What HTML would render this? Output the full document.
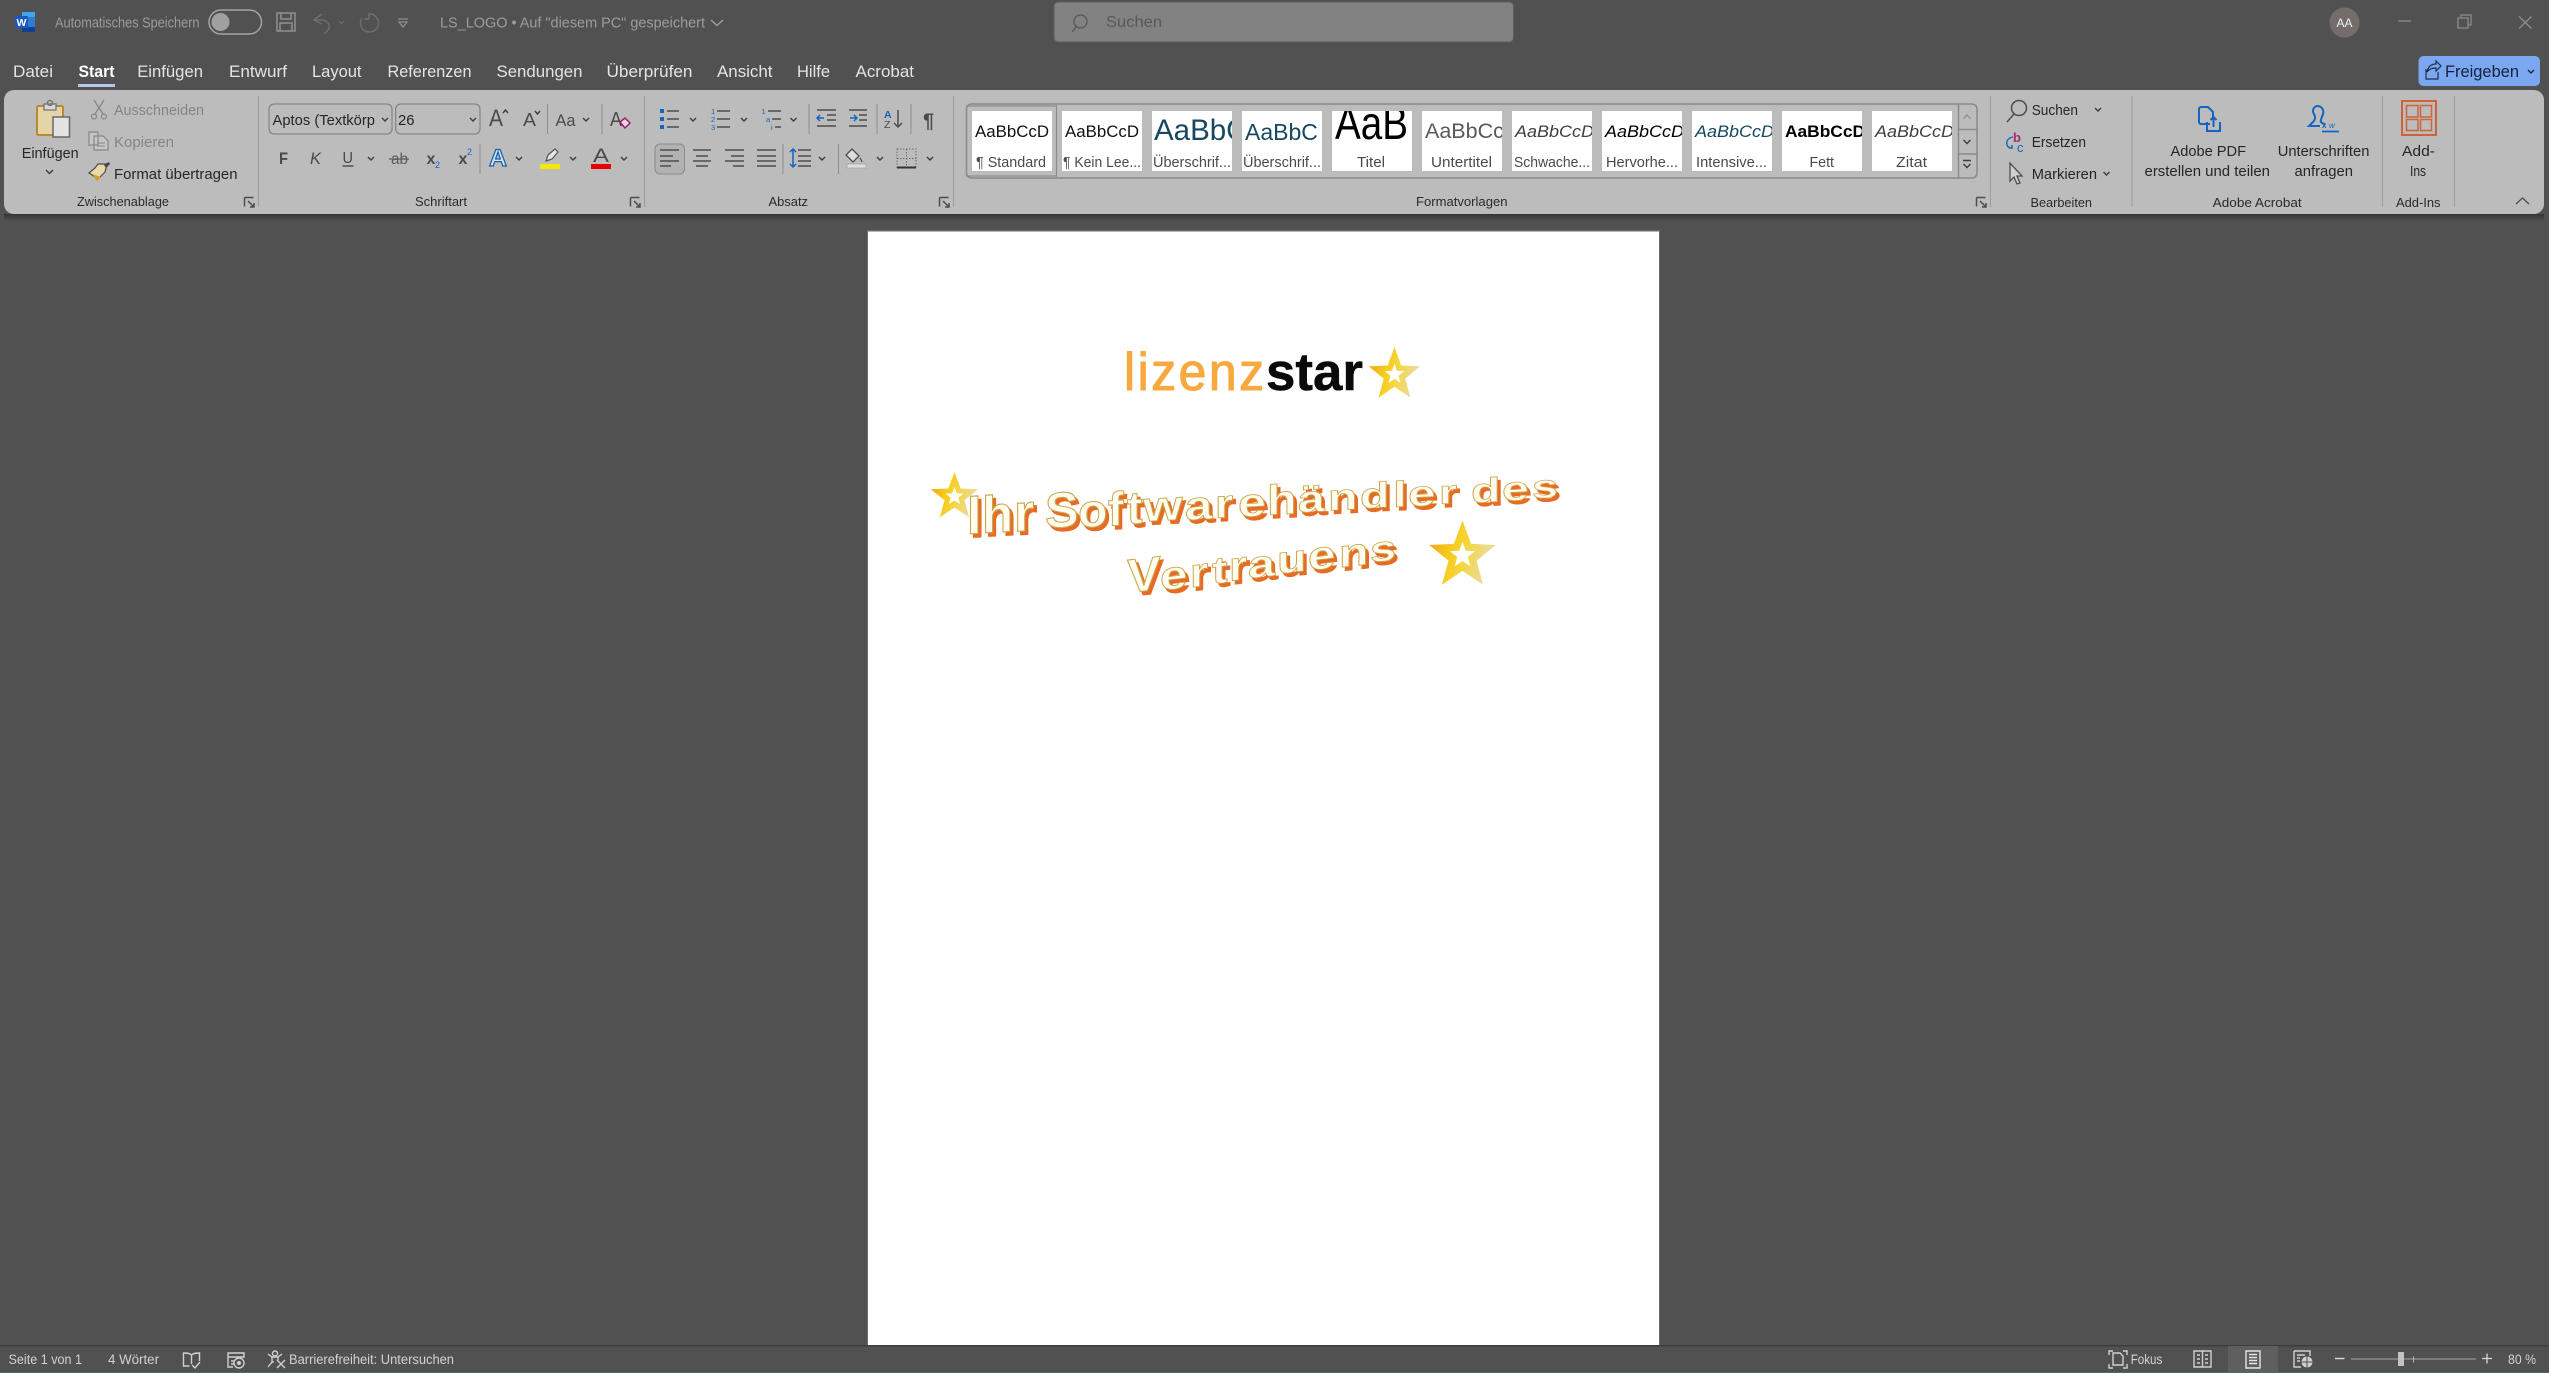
<!DOCTYPE html>
<html lang="de"><head><meta charset="utf-8"><title>LS_LOGO - Word</title>
<style>
html,body{margin:0;padding:0;background:#515151;width:2549px;height:1373px;overflow:hidden}
svg{display:block}
text{font-family:"Liberation Sans",sans-serif;white-space:pre}
.m{font-size:17px;fill:#e4e4e4}
.r{font-size:15px;fill:#262626}
.d{font-size:15px;fill:#858585}
.g{font-size:13px;fill:#2a2a2a}
.l{font-size:14.5px;fill:#4a4a4a}
.s{font-size:13.5px;fill:#d2d2d2}
.ti{font-size:14.5px;fill:#9c9c9c}
.sm{font-size:17px;fill:#111}
.i{fill:none;stroke:#4d4d4d;stroke-width:1.5}
.c{fill:none;stroke:#3c3c3c;stroke-width:1.4}
.b{fill:none;stroke:#1565c0;stroke-width:2}
.w{font-weight:bold;font-size:52px;fill:#fffdf0;stroke:#cda648;stroke-width:1.1}
.st{fill:none;stroke:#cfcfcf;stroke-width:1.4}
</style></head>
<body>
<svg width="2549" height="1373" viewBox="0 0 2549 1373" xmlns="http://www.w3.org/2000/svg">
<defs>
<linearGradient id="gold" x1="0" y1="0" x2="1" y2="0.25"><stop offset="0" stop-color="#ef9c14"/><stop offset=".4" stop-color="#f6cb1c"/><stop offset=".62" stop-color="#f5d63c"/><stop offset="1" stop-color="#eadba0"/></linearGradient>
<filter id="sh" x="-5%" y="-20%" width="110%" height="140%"><feDropShadow dx="3" dy="3.5" stdDeviation="0" flood-color="#e66c28"/></filter>
<linearGradient id="ribbonshadow" x1="0" y1="0" x2="0" y2="1"><stop offset="0" stop-color="#333"/><stop offset="1" stop-color="#515151"/></linearGradient>
</defs>
<rect width="2549" height="1373" fill="#515151"/>

<!-- title bar -->
<rect x="22" y="12" width="13" height="20" rx="1" fill="#2b7cd3"/><rect x="22" y="12" width="13" height="5" fill="#41a5ee"/><rect x="22" y="27" width="13" height="5" fill="#103f91"/>
<rect x="15" y="16" width="13" height="12" rx="1" fill="#185abd"/>
<text x="16.5" y="26" font-size="10.5" font-weight="bold" fill="#fff">W</text>
<text class="ti" x="55" y="27.500" textLength="144.500" lengthAdjust="spacingAndGlyphs">Automatisches Speichern</text>
<rect x="209" y="10" width="52.500" height="24" rx="12" fill="none" stroke="#a4a4a4" stroke-width="1.500"/>
<circle cx="220.500" cy="22" r="9" fill="#a0a0a0"/>
<path d="M277 13h18v18h-18zM281 13v6h10v-6M280 31v-8h12v8" fill="none" stroke="#909090" stroke-width="1.500"/>
<path d="M322 14l-8 6 8 4M315 20h6c6 0 9 4 8 8-1 3-3 4-5 6" fill="none" stroke="#6e6e6e" stroke-width="1.500"/>
<path d="M339 21l2.500 2.500 2.500-2.500" fill="none" stroke="#6e6e6e" stroke-width="1.200"/>
<path d="M369 14a9 9 0 1 1-7 4M369 13v6h-5" fill="none" stroke="#6e6e6e" stroke-width="1.500"/>
<path d="M398 19h10M399 22l4 5 4-5z" fill="none" stroke="#909090" stroke-width="1.200"/>
<text class="ti" x="440" y="27.500" textLength="265" lengthAdjust="spacingAndGlyphs">LS_LOGO • Auf "diesem PC" gespeichert</text>
<path d="M711 20l6 5.500 6-5.500" fill="none" stroke="#a0a0a0" stroke-width="1.300"/>

<!-- search -->
<rect x="1054" y="2" width="459.500" height="40" rx="4" fill="#828282" stroke="#5c5c5c"/>
<path d="M1080.500 15a6.500 6.500 0 1 1-.1 0M1076 27l-4 5" fill="none" stroke="#5a5a5a" stroke-width="1.400"/>
<text x="1106" y="27" font-size="16" fill="#585858" textLength="56" lengthAdjust="spacingAndGlyphs">Suchen</text>

<!-- window controls -->
<circle cx="2344.500" cy="22.500" r="15" fill="#756c6c"/>
<text x="2336.500" y="27" font-size="12" fill="#f0f0f0" textLength="16" lengthAdjust="spacingAndGlyphs">AA</text>
<path d="M2398 21h13" stroke="#8d8d8d" stroke-width="1.300"/>
<path d="M2458 18h10v10h-10zM2461 18v-3h10v10h-3" fill="none" stroke="#8d8d8d" stroke-width="1.300"/>
<path d="M2519 16.500l12.500 12M2531.500 16.500l-12.500 12" stroke="#8d8d8d" stroke-width="1.300"/>

<!-- menu -->
<text class="m" x="13" y="77" textLength="40" lengthAdjust="spacingAndGlyphs">Datei</text>
<text class="m" x="78.500" y="77" textLength="36" lengthAdjust="spacingAndGlyphs" font-weight="bold" style="fill:#fff">Start</text>
<text class="m" x="137.200" y="77" textLength="65.800" lengthAdjust="spacingAndGlyphs">Einfügen</text>
<text class="m" x="229" y="77" textLength="58" lengthAdjust="spacingAndGlyphs">Entwurf</text>
<text class="m" x="312" y="77" textLength="49.500" lengthAdjust="spacingAndGlyphs">Layout</text>
<text class="m" x="387.500" y="77" textLength="84" lengthAdjust="spacingAndGlyphs">Referenzen</text>
<text class="m" x="496.500" y="77" textLength="86" lengthAdjust="spacingAndGlyphs">Sendungen</text>
<text class="m" x="606.500" y="77" textLength="86" lengthAdjust="spacingAndGlyphs">Überprüfen</text>
<text class="m" x="717" y="77" textLength="55.500" lengthAdjust="spacingAndGlyphs">Ansicht</text>
<text class="m" x="797" y="77" textLength="33" lengthAdjust="spacingAndGlyphs">Hilfe</text>
<text class="m" x="855.500" y="77" textLength="58.500" lengthAdjust="spacingAndGlyphs">Acrobat</text>
<rect x="78" y="84" width="37" height="3" fill="#b4c8ec"/>

<!-- Freigeben -->
<rect x="2418.500" y="56" width="121.500" height="30" rx="5" fill="#7ba7f1"/>
<path d="M2426 69v10h12v-7M2427 72c1-5 4-8 9-8v-3l5 5-5 5v-3c-4 0-7 1-9 4z" fill="none" stroke="#1d2c4d" stroke-width="1.200"/>
<text x="2445" y="77" font-size="17" fill="#14213d" textLength="74" lengthAdjust="spacingAndGlyphs">Freigeben</text>
<path d="M2528 70l3 3 3-3" fill="none" stroke="#14213d" stroke-width="1.300"/>

<!-- ribbon -->
<rect x="4" y="214" width="2540" height="7" fill="url(#ribbonshadow)"/>
<rect x="4" y="90" width="2540" height="124" rx="10" fill="#bcbcbc"/>
<g stroke="#9c9c9c" stroke-width="1">
<path d="M258.500 96v111M644.500 96v111M953.500 96v111M1990.500 96v111M2132 96v111M2382.500 96v111M2454.500 96v111"/>
</g>

<!-- clipboard group -->
<rect x="37" y="106" width="26" height="29" rx="1.500" fill="#e6d4a9" stroke="#b88a2e" stroke-width="2"/>
<rect x="44" y="104" width="12" height="6" fill="#d8d8d8" stroke="#6e6e6e" stroke-width="1.200"/>
<circle cx="50" cy="103" r="2.500" fill="none" stroke="#6e6e6e" stroke-width="1.200"/>
<rect x="53" y="117" width="16.500" height="20" fill="#e2e2e2" stroke="#686868" stroke-width="1.500"/>
<text class="r" x="21.700" y="158" textLength="57" lengthAdjust="spacingAndGlyphs">Einfügen</text>
<path class="c" d="M46 170l3.500 3.500 3.500-3.500"/>
<path d="M94 100l9 14M104 100l-9 14" stroke="#868686" stroke-width="1.200"/>
<circle cx="94" cy="116.500" r="2.500" fill="none" stroke="#868686" stroke-width="1.200"/><circle cx="104" cy="116.500" r="2.500" fill="none" stroke="#868686" stroke-width="1.200"/>
<text class="d" x="114" y="115" textLength="90" lengthAdjust="spacingAndGlyphs">Ausschneiden</text>
<path d="M89 132h9l0 13h-9zM94 136h9l5 5v9h-14z" fill="#c6c6c6" stroke="#868686" stroke-width="1.200"/>
<path d="M97 143h8M97 146h8" stroke="#868686"/>
<text class="d" x="114" y="147" textLength="60" lengthAdjust="spacingAndGlyphs">Kopieren</text>
<path d="M98 164l9 0-2 8-7 7-9-6 6-5z" fill="#e9d9a8" stroke="#4a4a4a" stroke-width="1.200"/>
<path d="M92 174l5 7 4-4z" fill="#d59c26"/><path d="M104 165l5-3 1 2-4 4z" fill="#444"/>
<text class="r" x="114" y="179" textLength="123.500" lengthAdjust="spacingAndGlyphs">Format übertragen</text>
<text class="g" x="77" y="206" textLength="92" lengthAdjust="spacingAndGlyphs">Zwischenablage</text>
<path class="i" d="M244.500 197.500h9M244.500 197.500v9M248 201l6 6m0-4v4h-4" stroke-width="1"/>

<!-- font group -->
<rect x="269" y="104" width="123" height="30" rx="5" fill="#bcbcbc" stroke="#7a7a7a"/>
<rect x="395.700" y="104" width="84.300" height="30" rx="5" fill="#bcbcbc" stroke="#7a7a7a"/>
<text class="r" x="272.500" y="125" font-size="15.500" textLength="102.500" lengthAdjust="spacingAndGlyphs">Aptos (Textkörp</text>
<text class="r" x="398" y="125" font-size="15.500" textLength="16.500" lengthAdjust="spacingAndGlyphs">26</text>
<path class="c" d="M382 118l3 3 3-3M470 118l3 3 3-3"/>
<text x="489" y="126" font-size="24" fill="#4a4a4a" textLength="14" lengthAdjust="spacingAndGlyphs">A</text>
<path class="c" d="M503 113l2.500-3 2.500 3"/>
<text x="523" y="126" font-size="18" fill="#4a4a4a" textLength="13" lengthAdjust="spacingAndGlyphs">A</text>
<path class="c" d="M535 111l2.500 3 2.500-3"/>
<path d="M547.500 104v30M602 104v30" stroke="#8e8e8e"/>
<text x="555.500" y="126" font-size="17" fill="#4a4a4a" textLength="20" lengthAdjust="spacingAndGlyphs">Aa</text>
<path class="c" d="M583 118l3 3 3-3"/>
<text x="610" y="126" font-size="20" fill="#4a4a4a" textLength="12" lengthAdjust="spacingAndGlyphs">A</text>
<path d="M620 122l5-4 5 5-5 5z" fill="#e8d6e0" stroke="#9b1f6a" stroke-width="1.500"/>
<text x="279" y="164" font-size="17" font-weight="bold" fill="#4a4a4a" textLength="9" lengthAdjust="spacingAndGlyphs">F</text>
<text x="310" y="164" font-size="17" font-style="italic" fill="#4a4a4a" textLength="11" lengthAdjust="spacingAndGlyphs">K</text>
<text x="342.500" y="163" font-size="16" fill="#4a4a4a" textLength="10.500" lengthAdjust="spacingAndGlyphs">U</text>
<path d="M342.500 166h11" stroke="#4a4a4a" stroke-width="1.400"/>
<path class="c" d="M368 157l3 3 3-3"/>
<text x="391" y="164" font-size="15.500" fill="#5c5c5c" textLength="17" lengthAdjust="spacingAndGlyphs">ab</text>
<path d="M389 159h20" stroke="#5c5c5c" stroke-width="1.200"/>
<text x="426.500" y="164" font-size="16" font-weight="bold" fill="#4a4a4a">x</text>
<text x="435" y="168" font-size="9" fill="#1565c0">2</text>
<text x="458.500" y="164" font-size="16" font-weight="bold" fill="#4a4a4a">x</text>
<text x="467" y="155" font-size="9" fill="#1565c0">2</text>
<path d="M480 144v30" stroke="#8e8e8e"/>
<text x="489" y="166" font-size="24" font-weight="bold" fill="#cfe4f6" stroke="#1a5fa8" stroke-width="1.200" textLength="18" lengthAdjust="spacingAndGlyphs">A</text>
<path class="c" d="M516 157l3 3 3-3"/>
<path d="M546 161l2-6 7-6 3 3-6 7z" fill="#e6e6e6" stroke="#555" stroke-width="1.200"/>
<rect x="540" y="164" width="20" height="5" fill="#f4ea00"/>
<path class="c" d="M570 157l3 3 3-3"/>
<text x="593" y="162" font-size="19" fill="#4a4a4a" textLength="16" lengthAdjust="spacingAndGlyphs">A</text>
<rect x="591" y="164" width="20" height="5" fill="#e60000"/>
<path class="c" d="M621 157l3 3 3-3"/>
<text class="g" x="415" y="206" textLength="52" lengthAdjust="spacingAndGlyphs">Schriftart</text>
<path class="i" d="M630.500 197.500h9M630.500 197.500v9M634 201l6 6m0-4v4h-4" stroke-width="1"/>

<!-- paragraph group -->
<path d="M660 109h4v4h-4zM660 117h4v4h-4zM660 125h4v4h-4z" fill="#1565c0"/>
<path class="i" d="M667 111h12M667 119h12M667 127h12"/>
<path class="c" d="M690 118l3 3 3-3M741 118l3 3 3-3M790.500 118l3 3 3-3"/>
<text x="711" y="114" font-size="7.500" fill="#1565c0">1</text><text x="711" y="122" font-size="7.500" fill="#1565c0">2</text><text x="711" y="130" font-size="7.500" fill="#1565c0">3</text>
<path class="i" d="M717 111h13M717 119h13M717 127h13"/>
<text x="761.500" y="114" font-size="7.500" fill="#1565c0">1</text><text x="766" y="122" font-size="7.500" fill="#1565c0">a</text><text x="771" y="130" font-size="7.500" fill="#1565c0">i</text>
<path class="i" d="M768 111h13M772 119h9M775 127h6"/>
<path d="M809 104v30M877 104v30M911 104v30" stroke="#8e8e8e"/>
<path class="i" d="M817 110h19M827 115h9M827 120h9M817 126h19"/>
<path d="M824 118h-7m3-3l-3 3 3 3" fill="none" stroke="#1565c0" stroke-width="1.500"/>
<path class="i" d="M849 110h18M859 115h8M859 120h8M849 126h18"/>
<path d="M850 118h7m-3-3l3 3-3 3" fill="none" stroke="#1565c0" stroke-width="1.500"/>
<text x="884" y="118" font-size="10.500" font-weight="bold" fill="#1565c0">A</text><text x="884" y="128" font-size="10.500" fill="#4a4a4a">Z</text>
<path class="i" d="M898 110v17m-4-4l4 4 4-4"/>
<text x="923" y="127.500" font-size="20" font-weight="bold" fill="#4a4a4a">¶</text>

<rect x="655" y="144" width="29.500" height="30" rx="5" fill="#b2b2b2" stroke="#8a8a8a"/>
<path class="i" d="M660 150h19M660 156h13M660 161h19M660 166h11"/>
<path class="i" d="M693 150h18M696 156h12M693 161h18M696 166h12"/>
<path class="i" d="M725 150h19M731 156h13M725 161h19M733 166h11"/>
<path class="i" d="M757 150h19M757 156h19M757 161h19M757 166h19"/>
<path d="M783 144v30M838.500 144v30" stroke="#8e8e8e"/>
<path class="i" d="M798 150h13M798 156h13M798 161h13M798 166h13"/>
<path d="M793 149v18m-3-15l3-3 3 3m-6 12l3 3 3-3" fill="none" stroke="#1565c0" stroke-width="1.500"/>
<path class="c" d="M819 157l3 3 3-3"/>
<path d="M852 149l7 7-6 6-7-7zM860 158c1 2 2 3 2 4" fill="#ddd" stroke="#4d4d4d" stroke-width="1.300"/>
<rect x="847" y="164" width="19" height="4" fill="#dedede" stroke="#a0a0a0" stroke-width=".7"/>
<path class="c" d="M877 157l3 3 3-3"/>
<path d="M897 149h19v19h-19zM906.500 149v19M897 158.500h19" fill="none" stroke="#6a6a6a" stroke-width="1" stroke-dasharray="1.500 1.500"/>
<path d="M897 167.500h19" stroke="#333" stroke-width="2"/>
<path class="c" d="M927 157l3 3 3-3"/>
<text class="g" x="768.500" y="206" textLength="39.500" lengthAdjust="spacingAndGlyphs">Absatz</text>
<path class="i" d="M939.500 197.500h9M939.500 197.500v9M943 201l6 6m0-4v4h-4" stroke-width="1"/>

<!-- style gallery -->
<rect x="966.500" y="104" width="1010.500" height="74" rx="5" fill="#bcbcbc" stroke="#8a8a8a" stroke-width="1.500"/>
<path d="M1958.500 104v74M1958.500 129.500h18M1958.500 154h18" stroke="#8a8a8a" stroke-width="1.500"/>
<rect x="966.500" y="106" width="90" height="70" fill="none" stroke="#8c8c8c" stroke-width="1.200"/>

<svg x="972" y="111" width="80" height="60"><rect width="80" height="60" fill="#fff"/><text class="sm" x="3" y="26" textLength="74" lengthAdjust="spacingAndGlyphs">AaBbCcD</text></svg>
<svg x="1062" y="111" width="80" height="60"><rect width="80" height="60" fill="#fff"/><text class="sm" x="3" y="26" textLength="74" lengthAdjust="spacingAndGlyphs">AaBbCcD</text></svg>
<svg x="1152" y="111" width="80" height="60"><rect width="80" height="60" fill="#fff"/><text x="2" y="29" font-size="29.500" fill="#17485f">AaBbC</text></svg>
<svg x="1242" y="111" width="80" height="60"><rect width="80" height="60" fill="#fff"/><text x="3" y="29" font-size="23" fill="#17485f">AaBbC</text></svg>
<svg x="1332" y="111" width="80" height="60"><rect width="80" height="60" fill="#fff"/><text x="3" y="28" font-size="46" fill="#000" textLength="73" lengthAdjust="spacingAndGlyphs">AaB</text></svg>
<svg x="1422" y="111" width="80" height="60"><rect width="80" height="60" fill="#fff"/><text x="3" y="27" font-size="21.500" fill="#595959">AaBbCc</text></svg>
<svg x="1512" y="111" width="80" height="60"><rect width="80" height="60" fill="#fff"/><text x="3" y="26" font-size="17" font-style="italic" fill="#404040" textLength="79" lengthAdjust="spacingAndGlyphs">AaBbCcD</text></svg>
<svg x="1602" y="111" width="80" height="60"><rect width="80" height="60" fill="#fff"/><text x="3" y="26" font-size="17" font-style="italic" fill="#000" textLength="79" lengthAdjust="spacingAndGlyphs">AaBbCcD</text></svg>
<svg x="1692" y="111" width="80" height="60"><rect width="80" height="60" fill="#fff"/><text x="3" y="26" font-size="17" font-style="italic" fill="#17485f" textLength="79" lengthAdjust="spacingAndGlyphs">AaBbCcD</text></svg>
<svg x="1782" y="111" width="80" height="60"><rect width="80" height="60" fill="#fff"/><text x="3" y="26" font-size="17" font-weight="bold" fill="#000" textLength="80" lengthAdjust="spacingAndGlyphs">AaBbCcD</text></svg>
<svg x="1872" y="111" width="80" height="60"><rect width="80" height="60" fill="#fff"/><text x="3" y="26" font-size="17" font-style="italic" fill="#404040" textLength="79" lengthAdjust="spacingAndGlyphs">AaBbCcD</text></svg>

<text class="l" x="976" y="167" textLength="70" lengthAdjust="spacingAndGlyphs">¶ Standard</text>
<text class="l" x="1063" y="167" textLength="78" lengthAdjust="spacingAndGlyphs">¶ Kein Lee...</text>
<text class="l" x="1153" y="167" textLength="78" lengthAdjust="spacingAndGlyphs">Überschrif...</text>
<text class="l" x="1243" y="167" textLength="78" lengthAdjust="spacingAndGlyphs">Überschrif...</text>
<text class="l" x="1357" y="167" textLength="28" lengthAdjust="spacingAndGlyphs">Titel</text>
<text class="l" x="1431" y="167" textLength="61" lengthAdjust="spacingAndGlyphs">Untertitel</text>
<text class="l" x="1514" y="167" textLength="76" lengthAdjust="spacingAndGlyphs">Schwache...</text>
<text class="l" x="1606" y="167" textLength="72" lengthAdjust="spacingAndGlyphs">Hervorhe...</text>
<text class="l" x="1696" y="167" textLength="71" lengthAdjust="spacingAndGlyphs">Intensive...</text>
<text class="l" x="1809.500" y="167" textLength="24.500" lengthAdjust="spacingAndGlyphs">Fett</text>
<text class="l" x="1896" y="167" textLength="31" lengthAdjust="spacingAndGlyphs">Zitat</text>
<path d="M1963.500 118.500l3.500-3.500 3.500 3.500" fill="none" stroke="#8e8e8e" stroke-width="1.300"/>
<path class="c" d="M1963.500 140l3.500 3.500 3.500-3.500"/>
<path class="c" d="M1963 160.500h8M1963.500 164l3.500 3.500 3.500-3.500"/>
<text class="g" x="1416" y="206" textLength="91.500" lengthAdjust="spacingAndGlyphs">Formatvorlagen</text>
<path class="i" d="M1976.500 197.500h9M1976.500 197.500v9M1980 201l6 6m0-4v4h-4" stroke-width="1"/>

<!-- editing -->
<circle cx="2019" cy="108" r="7.500" fill="none" stroke="#4d4d4d" stroke-width="1.500"/><path class="i" d="M2014 114l-7 8"/>
<text class="r" x="2031.700" y="115" textLength="46.300" lengthAdjust="spacingAndGlyphs">Suchen</text>
<path class="c" d="M2095 108l3 3 3-3"/>
<text x="2013" y="142" font-size="13" font-weight="bold" fill="#a62d72">b</text><text x="2017" y="152" font-size="13" fill="#1565c0">c</text>
<path d="M2013 137c-5 1-7 4-6 8 1 2 2 3 5 3m0-3v3h-3" fill="none" stroke="#1565c0" stroke-width="1.400"/>
<text class="r" x="2031.700" y="147" textLength="54.300" lengthAdjust="spacingAndGlyphs">Ersetzen</text>
<path d="M2010 163v18l4-4 3 7 3-1-3-7h5z" fill="#cfcfcf" stroke="#4d4d4d" stroke-width="1.300"/>
<text class="r" x="2031.700" y="179" textLength="65.300" lengthAdjust="spacingAndGlyphs">Markieren</text>
<path class="c" d="M2103.500 172l3 3 3-3"/>
<text class="g" x="2030.500" y="207" textLength="61.500" lengthAdjust="spacingAndGlyphs">Bearbeiten</text>

<!-- acrobat -->
<path class="b" d="M2210 124h-9a2 2 0 0 1-2-2v-13a2 2 0 0 1 2-2h7l5 5v5"/>
<path class="b" d="M2207 122v9h13v-9M2213.500 127v-10m-3 3l3-3 3 3" stroke-width="1.700"/>
<text class="r" x="2170.500" y="156" textLength="75.500" lengthAdjust="spacingAndGlyphs">Adobe PDF</text>
<text class="r" x="2144.500" y="176" textLength="125.500" lengthAdjust="spacingAndGlyphs">erstellen und teilen</text>
<path class="b" d="M2318 106a6 6 0 0 1 5 8c-1 4-3 6-2 8 1 1 2 2 4 2M2318 106a5 5 0 0 0-4 8c2 4 1 6-1 8l-4 4h11" stroke-width="1.600"/>
<text x="2322" y="128" font-size="8" font-weight="bold" fill="#1565c0">x</text>
<text x="2329" y="128" font-size="8" font-style="italic" fill="#1565c0">w</text>
<path d="M2322 131.500h17" stroke="#1565c0" stroke-width="1.800"/>
<text class="r" x="2277.700" y="156" textLength="91.700" lengthAdjust="spacingAndGlyphs">Unterschriften</text>
<text class="r" x="2294.500" y="176" textLength="58.500" lengthAdjust="spacingAndGlyphs">anfragen</text>
<text class="g" x="2212.700" y="207" textLength="89" lengthAdjust="spacingAndGlyphs">Adobe Acrobat</text>

<!-- add-ins -->
<rect x="2402" y="101" width="34" height="34" fill="none" stroke="#d0623a" stroke-width="2"/>
<path d="M2406.500 105.500h11.500v11.500h-11.500zM2420.500 105.500h11v11.500h-11zM2406.500 119.500h11.500v11h-11.500zM2420.500 119.500h11v11h-11z" fill="none" stroke="#d0623a" stroke-width="1.500"/>
<text class="r" x="2402" y="156" textLength="33" lengthAdjust="spacingAndGlyphs">Add-</text>
<text class="r" x="2410" y="176" textLength="16" lengthAdjust="spacingAndGlyphs">Ins</text>
<text class="g" x="2396" y="207" textLength="44.500" lengthAdjust="spacingAndGlyphs">Add-Ins</text>
<path d="M2516 204l6.500-6 6.500 6" fill="none" stroke="#4d4d4d" stroke-width="1.300"/>

<!-- page -->
<rect x="867" y="230" width="793" height="1115" fill="#6a6a6a"/>
<rect x="868" y="231.500" width="791" height="1113.500" fill="#fff"/>

<!-- logo -->
<text transform="translate(1124 390) scale(.94 1)" font-size="53" fill="#f7a83e" stroke="#f7a83e" stroke-width="1.100" textLength="149" lengthAdjust="spacing">lizenz</text>
<text x="1266" y="390" font-size="53" font-weight="bold" fill="#0a0a0a" stroke="#0a0a0a" stroke-width=".5" textLength="97" lengthAdjust="spacingAndGlyphs">star</text>

<!-- stars -->
<g transform="translate(1394.500 375) scale(27 28)"><polygon fill="url(#gold)" points="0,-1 .247,-.34 .951,-.309 .399,.13 .588,.809 0,.42 -.588,.809 -.399,.13 -.951,-.309 -.247,-.34"/><polygon fill="#fff" transform="translate(0 -.02) scale(.38)" points="0,-1 .247,-.34 .951,-.309 .399,.13 .588,.809 0,.42 -.588,.809 -.399,.13 -.951,-.309 -.247,-.34"/></g>
<g transform="translate(954.500 497) scale(25 25)"><polygon fill="url(#gold)" points="0,-1 .247,-.34 .951,-.309 .399,.13 .588,.809 0,.42 -.588,.809 -.399,.13 -.951,-.309 -.247,-.34"/><polygon fill="#fff" transform="translate(0 -.02) scale(.38)" points="0,-1 .247,-.34 .951,-.309 .399,.13 .588,.809 0,.42 -.588,.809 -.399,.13 -.951,-.309 -.247,-.34"/></g>
<g transform="translate(1462.500 556) scale(35 35.500)"><polygon fill="url(#gold)" points="0,-1 .247,-.34 .951,-.309 .399,.13 .588,.809 0,.42 -.588,.809 -.399,.13 -.951,-.309 -.247,-.34"/><polygon fill="#fff" transform="translate(0 -.02) scale(.38)" points="0,-1 .247,-.34 .951,-.309 .399,.13 .588,.809 0,.42 -.588,.809 -.399,.13 -.951,-.309 -.247,-.34"/></g>

<!-- word art line 1 -->
<g filter="url(#sh)">
<text class="w" transform="translate(967 534) skewY(-3) scale(1 1.050)">I</text>
<text class="w" transform="translate(982 533) skewY(-3) scale(.98 1)">h</text>
<text class="w" transform="translate(1014 531.500) skewY(-3) scale(1 1.020)">r</text>
<text class="w" transform="translate(1045 528) skewY(-3) scale(.97 .96)">S</text>
<text class="w" transform="translate(1078 527.500) skewY(-3) scale(.93 .9)">o</text>
<text class="w" transform="translate(1108 526) skewY(-3) scale(.9 .92)">f</text>
<text class="w" transform="translate(1127 524) skewY(-3) scale(.9 .88)">t</text>
<text class="w" transform="translate(1143 521.500) skewY(-3) scale(.98 .81)">w</text>
<text class="w" transform="translate(1185 520) skewY(-3) scale(.95 .77)">a</text>
<text class="w" transform="translate(1215 518) skewY(-3) scale(.9 .77)">r</text>
<text class="w" transform="translate(1238 517) skewY(-3) scale(.97 .77)">e</text>
<text class="w" transform="translate(1267 515) skewY(-3) scale(.93 .81)">h</text>
<text class="w" transform="translate(1298 512.500) skewY(-3) scale(.93 .73)">ä</text>
<text class="w" transform="translate(1328 510.500) skewY(-3) scale(.93 .71)">n</text>
<text class="w" transform="translate(1360 508.500) skewY(-3) scale(.93 .69)">d</text>
<text class="w" transform="translate(1393 507) skewY(-3) scale(.95 .69)">l</text>
<text class="w" transform="translate(1408 506.500) skewY(-3) scale(.95 .69)">e</text>
<text class="w" transform="translate(1439 504) skewY(-3) scale(.9 .64)">r</text>
<text class="w" transform="translate(1471 503) skewY(-3) scale(.93 .66)">d</text>
<text class="w" transform="translate(1502 501) skewY(-3) scale(.93 .65)">e</text>
<text class="w" transform="translate(1532 498.500) skewY(-3) scale(.9 .63)">s</text>
</g>
<!-- word art line 2 -->
<g filter="url(#sh)">
<text class="w" transform="translate(1127 593) skewY(-6.500) scale(.97 .92)">V</text>
<text class="w" transform="translate(1160 590.500) skewY(-6.500) scale(.95 .77)">e</text>
<text class="w" transform="translate(1190 587.500) skewY(-6.500) scale(.9 .79)">r</text>
<text class="w" transform="translate(1212 584) skewY(-6.500) scale(.9 .73)">t</text>
<text class="w" transform="translate(1229 581) skewY(-6.500) scale(.9 .79)">r</text>
<text class="w" transform="translate(1248 578.500) skewY(-6.500) scale(.93 .73)">a</text>
<text class="w" transform="translate(1277 574) skewY(-6.500) scale(.93 .75)">u</text>
<text class="w" transform="translate(1308 570.500) skewY(-6.500) scale(.95 .77)">e</text>
<text class="w" transform="translate(1339 567.500) skewY(-6.500) scale(.93 .75)">n</text>
<text class="w" transform="translate(1370 562.500) skewY(-6.500) scale(.9 .68)">s</text>
</g>

<!-- status bar -->
<rect x="0" y="1345" width="2549" height="28" fill="#515151"/>
<rect x="0" y="1345" width="2549" height="1.500" fill="#3d3d3d"/>
<rect x="0" y="1372" width="2549" height="1" fill="#4a6a6c"/>
<text class="s" x="8.500" y="1364" textLength="73.500" lengthAdjust="spacingAndGlyphs">Seite 1 von 1</text>
<text class="s" x="108" y="1364" textLength="51" lengthAdjust="spacingAndGlyphs">4 Wörter</text>
<path class="st" d="M191.500 1355c-2-2-5-2-8-2v13h6M191.500 1355c2-2 5-2 8-2v8M191.500 1355v9M192 1365l3 3 5-6"/>
<path class="st" d="M228 1353h16v4h-16zM228 1357v10h5M231 1361h3M231 1364h3"/>
<circle cx="239" cy="1363" r="5" fill="#515151" stroke="#cfcfcf" stroke-width="1.400"/><circle cx="239" cy="1363" r="2" fill="#cfcfcf"/>
<circle cx="275" cy="1353.500" r="2.500" class="st"/>
<path class="st" d="M268 1354l4 3h6l4-3M272 1357l0 5-4 5M278 1357l0 3M272 1362h2M277 1360l8 8M285 1360l-8 8"/>
<text class="s" x="289" y="1364" textLength="165" lengthAdjust="spacingAndGlyphs">Barrierefreiheit: Untersuchen</text>

<path class="st" d="M2109 1355v-4h4M2123 1351h4v4M2127 1364v4h-4M2113 1368h-4v-4M2113 1353h7l3 3v9h-10z"/>
<text class="s" x="2130.700" y="1364" textLength="31.600" lengthAdjust="spacingAndGlyphs">Fokus</text>
<path class="st" d="M2194 1351h17v16h-17zM2202.500 1351v16M2197 1355h3M2197 1359h3M2197 1363h3M2205 1355h3M2205 1359h3M2205 1363h3"/>
<rect x="2228" y="1346" width="50" height="26" fill="#5f5f5f"/>
<path d="M2246 1351h14v17h-14zM2249 1354.500h8M2249 1357.500h8M2249 1360.500h8M2249 1363.500h8" fill="none" stroke="#e4e4e4" stroke-width="1.400"/>
<path class="st" d="M2294 1351h16v5M2294 1351v16h7M2297 1355h8M2297 1358h3M2297 1361h3"/>
<circle cx="2307" cy="1362" r="5.500" fill="#cfcfcf"/><path d="M2301.500 1362h11M2307 1356.500v11" stroke="#515151"/>
<path d="M2335 1358.500h9.500" stroke="#d8d8d8" stroke-width="1.500"/>
<path d="M2351 1359h125" stroke="#a8a8a8" stroke-width="1"/>
<path d="M2413.500 1356.500v6" stroke="#b8b8b8"/>
<rect x="2398" y="1352" width="6" height="14" fill="#c2c2c2"/>
<path d="M2482 1358.500h10M2487 1353.500v10" stroke="#d8d8d8" stroke-width="1.300"/>
<text class="s" x="2508" y="1364" textLength="28" lengthAdjust="spacingAndGlyphs">80 %</text>
</svg>
</body></html>
